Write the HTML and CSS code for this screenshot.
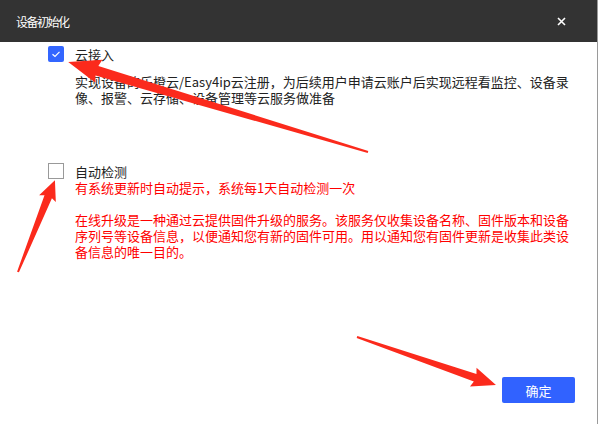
FILE: index.html
```html
<!DOCTYPE html>
<html lang="zh-CN">
<head>
  <meta charset="UTF-8">
  <title>设备初始化</title>
  <link rel="stylesheet" href="styles.css">
</head>
<body>
  <div class="dialog">
    <div class="titlebar">
      <span class="title">设备初始化</span>
      <svg class="close" width="9" height="9" viewBox="0 0 9 9">
        <path d="M1 1 L8 8 M8 1 L1 8" stroke="#fff" stroke-width="1.6" fill="none"/>
      </svg>
    </div>

    <div class="content">
      <div class="option">
        <span class="checkbox checked">
          <svg width="16" height="16" viewBox="0 0 16 16">
            <path d="M4.5 8.2 L7 10.5 L11.5 5.8" stroke="#fff" stroke-width="1.2" fill="none"/>
          </svg>
        </span>
        <div class="option-text">
          <div class="label">云接入</div>
          <p class="desc">实现设备的乐橙云/Easy4ip云注册，为后续用户申请云账户后实现远程看监控、设备录<br>像、报警、云存储、设备管理等云服务做准备</p>
        </div>
      </div>

      <div class="option second">
        <span class="checkbox"></span>
        <div class="option-text">
          <div class="label">自动检测</div>
          <p class="hint">有系统更新时自动提示，系统每1天自动检测一次</p>
          <p class="notice">在线升级是一种通过云提供固件升级的服务。该服务仅收集设备名称、固件版本和设备<br>序列号等设备信息，以便通知您有新的固件可用。用以通知您有固件更新是收集此类设<br>备信息的唯一目的。</p>
        </div>
      </div>
    </div>

    <div class="footer">
      <button class="btn-ok">确定</button>
    </div>
  </div>

  <!-- red annotation arrows drawn on top of the screenshot -->
  <svg class="arrows" width="599" height="424" viewBox="0 0 599 424">
    <g fill="#fb2a1c">
      <polygon transform="translate(368,152) rotate(196.7)" points="0,-1 283,-5 281,-12 313,0 281,12 283,5 0,1"/>
      <polygon transform="translate(18,272) rotate(-68.1)" points="0,-1 81,-4 79,-9 99,0 79,9 81,4 0,1"/>
      <polygon transform="translate(357,337) rotate(19.05)" points="0,-1 125,-4 123,-10 147,0 123,10 125,4 0,1"/>
    </g>
  </svg>
</body>
</html>
```

FILE: styles.css
```css
body {
  margin: 0;
  background: #fff;
  font-family: "Noto Sans CJK SC", "Noto Sans", sans-serif;
  color: #222;
}

.dialog {
  width: 597px;
  height: 424px;
  border-right: 1px solid #9a9a9a;
  display: flex;
  flex-direction: column;
}

.titlebar {
  height: 42px;
  background: #333333;
  display: flex;
  align-items: center;
  justify-content: space-between;
  padding: 0 31px 0 16px;
}

.title {
  color: #fff;
  font-size: 12px;
  letter-spacing: -1.5px;
}

.close {
  display: block;
  margin-top: 1px;
}

.content {
  flex: 1;
  padding: 5px 0 0 48px;
}

.option {
  display: flex;
  gap: 11px;
  font-size: 13px;
  line-height: 16px;
}

.option.second {
  margin-top: 58px;
}

.checkbox {
  width: 16px;
  height: 16px;
  box-sizing: border-box;
  border: 1px solid #999;
  margin-top: -1px;
  flex-shrink: 0;
}

.checkbox.checked {
  border: none;
  border-radius: 2px;
  background: #3366ff;
}

.checkbox svg {
  display: block;
}

.label {
  color: #222;
}

.desc {
  margin: 11px 0 0;
  color: #222;
}

.hint {
  margin: 0;
  color: #ff0000;
}

.notice {
  margin: 16px 0 0;
  color: #ff0000;
}

.footer {
  display: flex;
  justify-content: flex-end;
  padding: 0 22px 21px 0;
}

.btn-ok {
  width: 73px;
  height: 26px;
  border: none;
  border-radius: 2px;
  background: #3162ff;
  color: #fff;
  font-family: inherit;
  font-size: 13px;
  padding: 0;
}

.arrows {
  position: absolute;
  left: 0;
  top: 0;
  pointer-events: none;
}
```
